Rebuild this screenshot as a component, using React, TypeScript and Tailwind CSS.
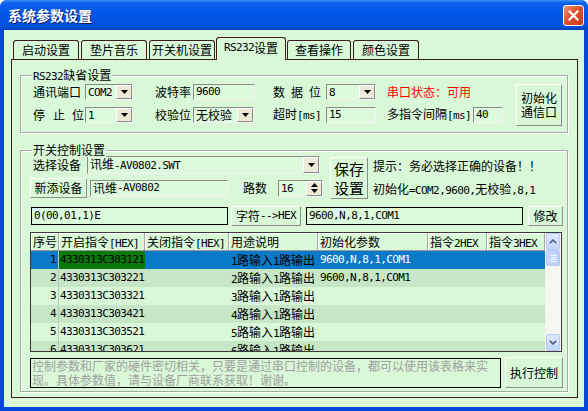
import React from 'react'

const sunken =
  'border border-t-[#8c8c8c] border-l-[#8c8c8c] border-r-[#f4f4f4] border-b-[#f4f4f4]'
const raised =
  'border border-t-[#ffffff] border-l-[#ffffff] border-r-[#8c8c8c] border-b-[#8c8c8c]'
// ascii runs look like SimSun's 6px half-width glyphs
const mono = "font-['DejaVu_Sans_Mono',monospace] text-[11px] tracking-[-0.6px]"

function A({ children }: { children: React.ReactNode }) {
  return <span className={mono}>{children}</span>
}

function DownArrow() {
  return (
    <svg width="7" height="4" viewBox="0 0 7 4">
      <path d="M0 0H7L3.5 4Z" fill="#000" />
    </svg>
  )
}

function UpArrow() {
  return (
    <svg width="7" height="4" viewBox="0 0 7 4">
      <path d="M0 4H7L3.5 0Z" fill="#000" />
    </svg>
  )
}

function Combo({ className, children }: { className: string; children: React.ReactNode }) {
  return (
    <div className={`flex shrink-0 ${sunken} bg-[#dcfadc] ${className}`}>
      <div className="flex-1 pl-[2px] self-center leading-[14px] whitespace-nowrap overflow-hidden">{children}</div>
      <div className={`w-[16px] flex items-center justify-center bg-[#ece9d8] ${raised}`}>
        <DownArrow />
      </div>
    </div>
  )
}

function Field({ className, children, dark }: { className: string; children: React.ReactNode; dark?: boolean }) {
  return (
    <div
      className={`${dark ? 'border border-black' : sunken} shrink-0 bg-[#dcfadc] pl-[2px] leading-[14px] whitespace-nowrap overflow-hidden flex items-center ${className}`}
    >
      {children}
    </div>
  )
}

function Btn({ className, children }: { className: string; children: React.ReactNode }) {
  return (
    <button
      type="button"
      className={`${raised} bg-[#d8f8d8] flex items-center justify-center text-center shrink-0 whitespace-nowrap ${className}`}
    >
      {children}
    </button>
  )
}

function GroupBox({ className, title, children }: { className: string; title: React.ReactNode; children: React.ReactNode }) {
  return (
    <div
      className={`relative border border-[#a4aca4] shadow-[inset_1px_1px_0_#ffffff,1px_1px_0_#ffffff] ${className}`}
    >
      <div className="absolute -top-[8px] left-[11px] px-[1px] bg-[#d8f8d8] leading-[14px] whitespace-nowrap">{title}</div>
      {children}
    </div>
  )
}

const tabs = [
  { label: <>启动设置</>, cls: 'ml-[2px] w-[66px]' },
  { label: <>垫片音乐</>, cls: 'ml-[2px] w-[66px]' },
  { label: <>开关机设置</>, cls: 'ml-[2px] w-[66px]' },
  { label: <><A>RS232</A>设置</>, cls: 'ml-[1px] w-[70px]', active: true },
  { label: <>查看操作</>, cls: 'ml-[1px] w-[64px]' },
  { label: <>颜色设置</>, cls: 'ml-[2px] w-[66px]' },
]

const cols = ['w-[28px]', 'w-[86px]', 'w-[84px]', 'w-[89px]', 'w-[110px]', 'w-[59px]', 'w-[58px]']
const headers = [
  <>序号</>,
  <>开启指令<A>[HEX]</A></>,
  <>关闭指令<A>[HEX]</A></>,
  <>用途说明</>,
  <>初始化参数</>,
  <>指令<A>2HEX</A></>,
  <>指令<A>3HEX</A></>,
]

const rows = [1, 2, 3, 4, 5, 6].map((n) => ({
  n,
  on: `4330313C30${n + 30}21`,
  init: n <= 2 ? '9600,N,8,1,COM1' : '',
}))

function ScrollBtn({ up }: { up?: boolean }) {
  return (
    <div className="h-[17px] mx-px rounded-[2px] border border-[#b7c9f5] bg-[linear-gradient(to_bottom,#e0e9fe,#c2d3fc)] flex items-center justify-center">
      <svg width="8" height="5" viewBox="0 0 8 5">
        <path
          d={up ? 'M0.8 4.2L4 1.2L7.2 4.2' : 'M0.8 0.8L4 3.8L7.2 0.8'}
          fill="none"
          stroke="#4d6185"
          strokeWidth="1.6"
        />
      </svg>
    </div>
  )
}

function Grid() {
  return (
    <div className="w-[532px] h-[120px] border border-[#3a3a3a] flex overflow-hidden">
      <div className="w-[514px] flex flex-col">
        <div className="flex h-[18px] shrink-0 border-b border-[#9a9a9a]">
          {headers.map((h, i) => (
            <div
              key={i}
              className={`${cols[i]} shrink-0 pl-[2px] leading-[17px] border-r border-[#a8a8a8] shadow-[inset_1px_1px_0_#ffffff] whitespace-nowrap overflow-hidden`}
            >
              {h}
            </div>
          ))}
        </div>
        {rows.map((r, idx) => {
          const sel = idx === 0
          const rowBg = sel ? 'bg-[#0a7ac8]' : idx % 2 === 1 ? 'bg-[#c6e6c6]' : 'bg-[#d8f8d8]'
          return (
            <div key={r.n} className={`flex h-[18px] shrink-0 leading-[18px] ${rowBg}`}>
              <div className={`${cols[0]} shrink-0 text-right pr-[2px] border-r border-[#b8c8b8] ${mono}`}>{r.n}</div>
              <div className={`${cols[1]} shrink-0 pl-[1px] ${mono} ${sel ? 'bg-[#0b780b]' : ''}`}>{r.on}</div>
              <div className={`${cols[2]} shrink-0`}></div>
              <div className={`${cols[3]} shrink-0 pl-[2px] whitespace-nowrap overflow-hidden`}>
                <A>{r.n}</A>路输入<A>1</A>路输出
              </div>
              <div className={`${cols[4]} shrink-0 pl-[2px] ${mono} ${sel ? 'text-white' : ''}`}>{r.init}</div>
              <div className={`${cols[5]} shrink-0`}></div>
              <div className={`${cols[6]} shrink-0`}></div>
            </div>
          )
        })}
      </div>
      <div className="w-[16px] flex flex-col bg-[#f5f6f0]">
        <ScrollBtn up />
        <div className="h-[16px] mx-px rounded-[2px] border border-[#b7c9f5] bg-[linear-gradient(to_right,#c9d8fc,#b9cdfa)] flex flex-col items-center justify-center gap-[1px]">
          <div className="w-[7px] h-px bg-[#eef3ff]" />
          <div className="w-[7px] h-px bg-[#eef3ff]" />
          <div className="w-[7px] h-px bg-[#eef3ff]" />
          <div className="w-[7px] h-px bg-[#eef3ff]" />
        </div>
        <div className="flex-1" />
        <ScrollBtn />
      </div>
    </div>
  )
}

export default function App() {
  return (
    <div className="w-[588px] h-[411px] flex flex-col bg-[#0848d8] rounded-t-[7px] overflow-hidden font-['Noto_Sans_CJK_SC','Noto_Sans_CJK_JP',sans-serif] text-[12px] text-black">
      {/* title bar */}
      <div className="h-[30px] shrink-0 flex items-center justify-between pl-[8px] pr-[4px] bg-[linear-gradient(to_bottom,#3d8ff8_0%,#0b60ee_10%,#0056e6_45%,#0052de_85%,#0043be_100%)]">
        <div className="text-white font-bold text-[14px] leading-[16px] [text-shadow:1px_1px_0_#0a1e6e]">系统参数设置</div>
        <div className="w-[21px] h-[21px] rounded-[3px] border border-white bg-[linear-gradient(135deg,#f29474,#e0522f_45%,#c63c1a)] flex items-center justify-center">
          <svg width="11" height="11" viewBox="0 0 11 11">
            <path d="M1.5 1.5L9.5 9.5M9.5 1.5L1.5 9.5" stroke="#fff" strokeWidth="2.2" strokeLinecap="square" />
          </svg>
        </div>
      </div>

      {/* client */}
      <div className="flex-1 mx-[4px] mb-[4px] bg-[#d8f8d8] flex flex-col pt-[7px] pl-[7px]">
        <div className="w-[567px] flex flex-col">
          {/* tabs */}
          <div className="h-[22px] flex items-end">
            {tabs.map((t, i) =>
              t.active ? (
                <div
                  key={i}
                  className={`${t.cls} relative z-10 h-[23px] -mb-px border border-b-0 border-[#3c1c1c] rounded-t-[3px] bg-[#d8f8d8] flex items-center justify-center pb-[2px] whitespace-nowrap`}
                >
                  {t.label}
                </div>
              ) : (
                <div
                  key={i}
                  className={`${t.cls} h-[19px] border border-b-0 border-[#3c1c1c] rounded-t-[3px] bg-[#d8f8d8] flex items-center justify-center whitespace-nowrap`}
                >
                  {t.label}
                </div>
              ),
            )}
          </div>

          {/* panel */}
          <div className="h-[339px] border border-[#3c1c1c] pt-[15px] pl-[8px] flex flex-col">
            <GroupBox title={<><A>RS232</A>缺省设置</>} className="w-[548px] h-[58px] shrink-0">
              <div className="flex pl-[12px] pt-[8px]">
                <div className="w-[483px] flex flex-col gap-[7px]">
                  <div className="flex h-[16px] items-center whitespace-nowrap">
                    <div className="w-[52px] shrink-0">通讯端口</div>
                    <Combo className="w-[48px] h-[16px]"><A>COM2</A></Combo>
                    <div className="w-[38px] ml-[22px] shrink-0">波特率</div>
                    <Field className="w-[62px] h-[16px]"><A>9600</A></Field>
                    <div className="w-[53px] ml-[18px] shrink-0 flex">
                      <span>数</span>
                      <span className="ml-[6px]">据</span>
                      <span className="ml-[6px]">位</span>
                    </div>
                    <Combo className="w-[50px] h-[16px]"><A>8</A></Combo>
                    <div className="ml-[11px] text-[#ff0000]">串口状态：可用</div>
                  </div>
                  <div className="flex h-[16px] items-center whitespace-nowrap">
                    <div className="w-[52px] shrink-0 flex">
                      <span>停</span>
                      <span className="ml-[8px]">止</span>
                      <span className="ml-[7px]">位</span>
                    </div>
                    <Combo className="w-[48px] h-[16px]"><A>1</A></Combo>
                    <div className="w-[38px] ml-[22px] shrink-0">校验位</div>
                    <Combo className="w-[61px] h-[16px]">无校验</Combo>
                    <div className="w-[53px] ml-[19px] shrink-0">超时<A>[ms]</A></div>
                    <Field className="w-[50px] h-[16px]"><A>15</A></Field>
                    <div className="w-[86px] ml-[11px] shrink-0">多指令间隔<A>[ms]</A></div>
                    <Field className="w-[30px] h-[16px]"><A>40</A></Field>
                  </div>
                </div>
                <Btn className="w-[46px] h-[42px] leading-[14px]">
                  初始化
                  <br />
                  通信口
                </Btn>
              </div>
            </GroupBox>

            <GroupBox title="开关控制设置" className="w-[548px] h-[242px] mt-[17px] shrink-0">
              <div className="flex flex-col pl-[9px] pt-[5px]">
                <div className="flex">
                  <div className="w-[293px] flex flex-col gap-[4px]">
                    <div className="flex h-[18px] items-center">
                      <div className="w-[57px] pl-[3px] shrink-0">选择设备</div>
                      <Combo className="w-[233px] h-[18px]">讯维<A>-AV0802.SWT</A></Combo>
                    </div>
                    <div className="flex h-[20px] items-center">
                      <Btn className="w-[57px] h-[20px]">新添设备</Btn>
                      <Field className="ml-[3px] w-[138px] h-[17px]">讯维<A>-AV0802</A></Field>
                      <div className="ml-[15px] w-[35px] shrink-0">路数</div>
                      <div className={`w-[45px] h-[17px] shrink-0 flex ${sunken} bg-[#dcfadc]`}>
                        <div className={`flex-1 pl-[2px] leading-[15px] ${mono}`}>16</div>
                        <div className={`w-[16px] flex flex-col bg-[#ece9d8] ${raised}`}>
                          <div className="flex-1 flex items-center justify-center">
                            <UpArrow />
                          </div>
                          <div className="flex-1 flex items-center justify-center">
                            <DownArrow />
                          </div>
                        </div>
                      </div>
                    </div>
                  </div>
                  <Btn className="ml-[7px] mt-[1px] w-[38px] h-[42px] text-[15px] leading-[19px]">
                    保存
                    <br />
                    设置
                  </Btn>
                  <div className="ml-[5px] flex flex-col whitespace-nowrap">
                    <div className="h-[18px] leading-[18px] mt-[1px]">提示：务必选择正确的设备！！</div>
                    <div className="h-[18px] leading-[18px] mt-[5px]">
                      初始化<A>=COM2,9600,</A>无校验<A>,8,1</A>
                    </div>
                  </div>
                </div>

                <div className="flex h-[20px] items-center mt-[7px]">
                  <Field dark className="ml-[1px] w-[197px] h-[18px]"><A>0(00,01,1)E</A></Field>
                  <Btn className="ml-[3px] w-[70px] h-[20px]">字符<A>--&gt;HEX</A></Btn>
                  <Field dark className="ml-[5px] w-[217px] h-[18px]"><A>9600,N,8,1,COM1</A></Field>
                  <Btn className="ml-[5px] w-[35px] h-[20px]">修改</Btn>
                </div>

                <div className="mt-[6px]">
                  <Grid />
                </div>

                <div className="flex mt-[5px] items-start">
                  <div className="mt-[1px] w-[471px] h-[30px] border border-black text-[#a0a0a0] leading-[14px] pl-[1px] whitespace-nowrap overflow-hidden">
                    <div>控制参数和厂家的硬件密切相关，只要是通过串口控制的设备，都可以使用该表格来实</div>
                    <div>现。具体参数值，请与设备厂商联系获取！谢谢。</div>
                  </div>
                  <Btn className="ml-[4px] w-[58px] h-[31px]">执行控制</Btn>
                </div>
              </div>
            </GroupBox>
          </div>
        </div>
      </div>
    </div>
  )
}
